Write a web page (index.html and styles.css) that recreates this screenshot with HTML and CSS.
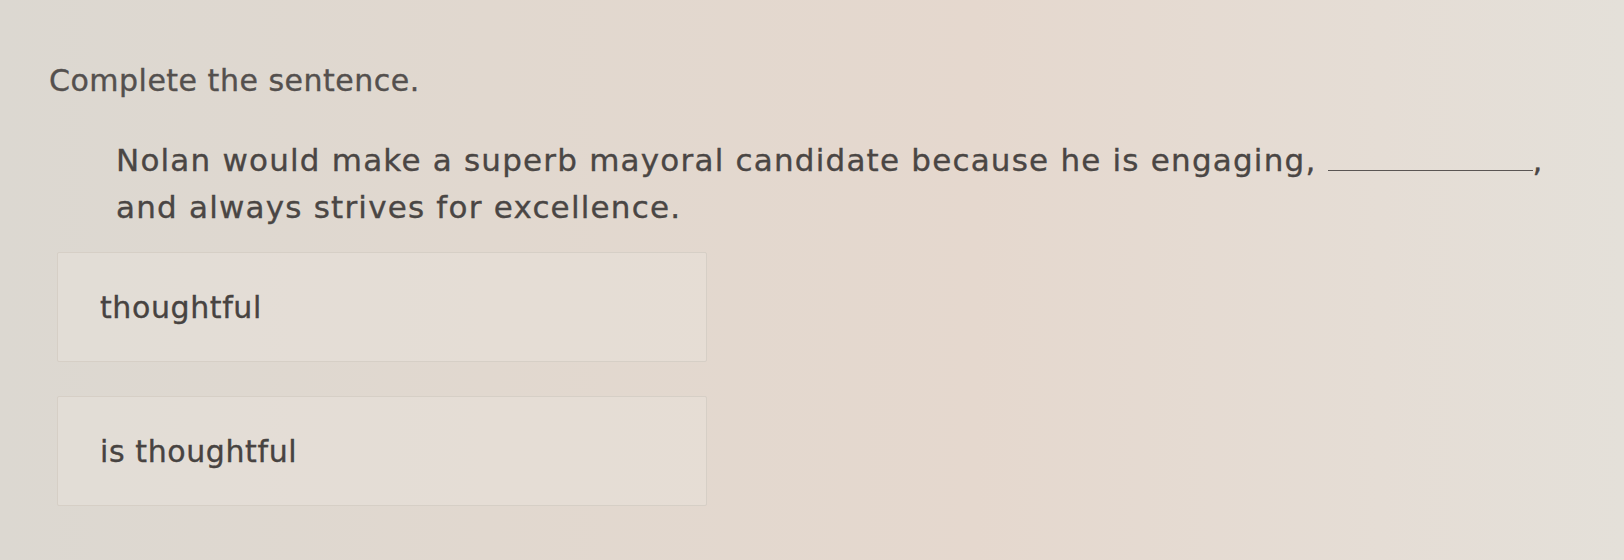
FILE: index.html
```html
<!DOCTYPE html>
<html lang="en">
<head>
  <meta charset="UTF-8" />
  <title>Complete the sentence</title>
  <link rel="stylesheet" href="styles.css">
</head>
<body>
  <main class="question">
    <h1 class="prompt">Complete the sentence.</h1>
    <p class="sentence">Nolan would make a superb mayoral candidate because he is engaging, <span class="blank"></span>, and always strives for excellence.</p>

    <div class="choices">
      <button type="button" class="choice">thoughtful</button>
      <button type="button" class="choice">is thoughtful</button>
    </div>
  </main>
</body>
</html>
```

FILE: styles.css
```css
* {
  box-sizing: border-box;
  margin: 0;
  padding: 0;
}

body {
  height: 100vh;
  overflow: hidden;
  font-family: "DejaVu Sans", Verdana, sans-serif;
  color: #4a4644;
  -webkit-text-stroke: 0.35px currentColor;
  background: linear-gradient(90deg, #dcd8d1 0%, #e1d8cf 30%, #e5d8ce 60%, #e5ddd5 85%, #e4e0d9 100%);
}

.question {
  padding: 61px 0 0 49px;
}

.prompt {
  font-size: 30px;
  font-weight: normal;
  line-height: 40px;
  letter-spacing: 0.5px;
  color: #54504e;
}

.sentence {
  margin: 36px 0 0 67px;
  width: 1450px;
  font-size: 31px;
  line-height: 47px;
  letter-spacing: 1.2px;
}

.blank {
  display: inline-block;
  width: 205px;
  border-bottom: 1.5px solid #5a5553;
  vertical-align: baseline;
}

.choices {
  display: flex;
  flex-direction: column;
  gap: 34px;
  margin: 21px 0 0 8px;
}

.choice {
  width: 650px;
  height: 110px;
  padding: 0 0 0 42px;
  text-align: left;
  font: inherit;
  font-size: 30px;
  letter-spacing: 0.6px;
  color: #474341;
  background: rgba(236, 231, 223, 0.4);
  border: 1.5px solid #d6cfc6;
  border-radius: 2px;
  cursor: pointer;
}
```
